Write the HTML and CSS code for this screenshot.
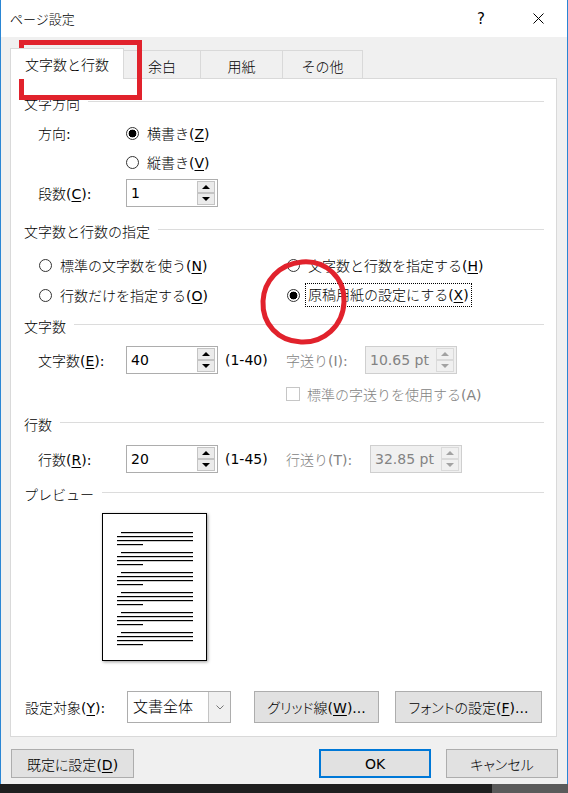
FILE: index.html
```html
<!DOCTYPE html>
<html lang="ja">
<head>
  <meta charset="UTF-8">
  <title>ページ設定</title>
  <link rel="stylesheet" href="styles.css">
</head>
<body>
  <div class="window">
    <div class="titlebar">
      <span class="title">ページ設定</span>
      <span class="help">?</span>
      <span class="close">
        <svg width="11" height="11" viewBox="0 0 11 11"><path d="M0.5 0.5 L10.5 10.5 M10.5 0.5 L0.5 10.5" stroke="#000" stroke-width="1" fill="none"/></svg>
      </span>
    </div>

    <div class="client">
      <div class="tabs">
        <div class="tab active">文字数と行数</div>
        <div class="tab tab-margin">余白</div>
        <div class="tab tab-paper">用紙</div>
        <div class="tab tab-other">その他</div>
      </div>

      <div class="panel">
        <div class="sec"><span>文字方向</span></div>

        <div class="row row-dir">
          <span class="label">方向<span class="key">:</span></span>
          <span class="radio"><span class="dot on"></span><span>横書き<span class="key">(<u>Z</u>)</span></span></span>
        </div>
        <div class="row row-vert">
          <span class="radio"><span class="dot"></span><span>縦書き<span class="key">(<u>V</u>)</span></span></span>
        </div>
        <div class="row row-cols">
          <span class="label">段数<span class="key">(<u>C</u>):</span></span>
          <div class="spin">
            <span class="spin-val">1</span>
            <span class="spin-btns"><span><i class="up"></i></span><span><i class="down"></i></span></span>
          </div>
        </div>

        <div class="sec sec-grid"><span>文字数と行数の指定</span></div>
        <div class="choices">
          <span class="radio"><span class="dot"></span><span>標準の文字数を使う<span class="key">(<u>N</u>)</span></span></span>
          <span class="radio"><span class="dot"></span><span>文字数と行数を指定する<span class="key">(<u>H</u>)</span></span></span>
          <span class="radio"><span class="dot"></span><span>行数だけを指定する<span class="key">(<u>O</u>)</span></span></span>
          <span class="radio radio-focus"><span class="dot on"></span><span class="focus">原稿用紙の設定にする<span class="key">(<u>X</u>)</span></span></span>
        </div>

        <div class="sec sec-chars"><span>文字数</span></div>
        <div class="row row-chars">
          <span class="label">文字数<span class="key">(<u>E</u>):</span></span>
          <div class="spin">
            <span class="spin-val">40</span>
            <span class="spin-btns"><span><i class="up"></i></span><span><i class="down"></i></span></span>
          </div>
          <span class="range">(1-40)</span>
          <span class="label2 pitch-chars">字送り<span class="key">(I):</span></span>
          <div class="spin spin-off">
            <span class="spin-val">10.65 pt</span>
            <span class="spin-btns"><span><i class="up"></i></span><span><i class="down"></i></span></span>
          </div>
        </div>
        <div class="row row-check">
          <span class="check"></span>
          <span class="muted">標準の字送りを使用する<span class="key">(A)</span></span>
        </div>

        <div class="sec sec-lines"><span>行数</span></div>
        <div class="row row-lines">
          <span class="label">行数<span class="key">(<u>R</u>):</span></span>
          <div class="spin">
            <span class="spin-val">20</span>
            <span class="spin-btns"><span><i class="up"></i></span><span><i class="down"></i></span></span>
          </div>
          <span class="range">(1-45)</span>
          <span class="label2 pitch-lines">行送り<span class="key">(T):</span></span>
          <div class="spin spin-off">
            <span class="spin-val">32.85 pt</span>
            <span class="spin-btns"><span><i class="up"></i></span><span><i class="down"></i></span></span>
          </div>
        </div>

        <div class="sec sec-preview"><span>プレビュー</span></div>
        <div class="preview">
          <svg width="103" height="146" viewBox="0 0 103 146">
            <g fill="#000">
              <rect x="18" y="18" width="72" height="1.2"/><rect x="14" y="22" width="76" height="1.2"/><rect x="14" y="26" width="76" height="1.2"/><rect x="14" y="30" width="26" height="1.2"/>
              <rect x="18" y="38" width="72" height="1.2"/><rect x="14" y="42" width="76" height="1.2"/><rect x="14" y="46" width="76" height="1.2"/><rect x="14" y="50" width="26" height="1.2"/>
              <rect x="18" y="58" width="72" height="1.2"/><rect x="14" y="62" width="76" height="1.2"/><rect x="14" y="66" width="76" height="1.2"/><rect x="14" y="70" width="26" height="1.2"/>
              <rect x="18" y="78" width="72" height="1.2"/><rect x="14" y="82" width="76" height="1.2"/><rect x="14" y="86" width="76" height="1.2"/><rect x="14" y="90" width="26" height="1.2"/>
              <rect x="18" y="98" width="72" height="1.2"/><rect x="14" y="102" width="76" height="1.2"/><rect x="14" y="106" width="76" height="1.2"/><rect x="14" y="110" width="26" height="1.2"/>
              <rect x="18" y="118" width="72" height="1.2"/><rect x="14" y="122" width="76" height="1.2"/><rect x="14" y="126" width="76" height="1.2"/><rect x="14" y="130" width="26" height="1.2"/>
            </g>
          </svg>
        </div>

        <div class="row row-target">
          <span class="label">設定対象<span class="key">(<u>Y</u>):</span></span>
          <div class="combo">
            <span class="combo-val">文書全体</span>
            <span class="combo-btn">
              <svg width="8" height="5" viewBox="0 0 8 5"><path d="M0.5 0.5 L4 4 L7.5 0.5" stroke="#777" fill="none"/></svg>
            </span>
          </div>
          <button class="btn btn-grid">グリッド線<span class="key">(<u>W</u>)...</span></button>
          <button class="btn btn-font">フォントの設定<span class="key">(<u>F</u>)...</span></button>
        </div>
      </div>

      <div class="footer">
        <button class="btn btn-default">既定に設定<span class="key">(<u>D</u>)</span></button>
        <button class="btn btn-ok key">OK</button>
        <button class="btn btn-cancel">キャンセル</button>
      </div>
    </div>
  </div>

  <div class="taskbar">
    <div class="taskbar-dark"></div>
    <div class="taskbar-gray"></div>
  </div>

  <!-- red annotations drawn over the dialog -->
  <div class="mark-rect"></div>
  <svg class="mark-circle" width="100" height="94" viewBox="0 0 100 94">
    <path d="M48 6 C72 4 91 22 90 46 C89 70 70 87 47 86 C24 85 8 68 9 45 C10 25 25 8 48 6" stroke="#e1222c" stroke-width="5" fill="none"/>
  </svg>
</body>
</html>
```

FILE: styles.css
```css
* {
  margin: 0;
  padding: 0;
  box-sizing: border-box;
}

body {
  position: relative;
  width: 568px;
  height: 793px;
  overflow: hidden;
  font-family: "DejaVu Sans", "Noto Sans CJK JP", sans-serif;
  font-size: 14px;
  font-weight: 300;
  color: #000;
  background: #f0f0f0;
}

/* latin runs keep the regular weight */
.key,
.spin-val,
.range,
.help {
  font-weight: 400;
}

u {
  text-decoration-thickness: 1px;
  text-underline-offset: 2px;
}

.window {
  height: 784px;
  display: flex;
  flex-direction: column;
  border-left: 1px solid #2a86d4;
  border-right: 1px solid #2a86d4;
}

/* title bar */
.titlebar {
  height: 37px;
  background: #fff;
  display: flex;
  align-items: center;
  padding-left: 9px;
  padding-right: 6px;
  font-size: 13px;
}

.title {
  flex: 1;
}

.help {
  width: 46px;
  text-align: center;
  font-size: 15px;
}

.close {
  width: 46px;
  margin-left: 11px;
  display: flex;
  justify-content: center;
}

/* dialog client area */
.client {
  flex: 1;
  padding: 11px 0 0 9px;
}

.tabs {
  display: flex;
  align-items: flex-end;
  height: 30px;
}

.tab {
  height: 28px;
  margin-left: -1px;
  border: 1px solid #d9d9d9;
  border-bottom: none;
  background: #f0f0f0;
  display: flex;
  align-items: center;
  justify-content: center;
  padding-top: 2px;
}

.tab.active {
  width: 114px;
  height: 31px;
  margin-left: 0;
  margin-bottom: -1px;
  background: #fff;
  position: relative;
  z-index: 1;
  padding-top: 0;
}

.tab-margin { width: 78px; }
.tab-paper { width: 83px; }
.tab-other { width: 81px; }

.panel {
  width: 547px;
  height: 659px;
  border: 1px solid #d9d9d9;
  background: #fff;
  padding: 14px 12px 0 13px;
  display: flex;
  flex-direction: column;
}

/* section headers with rule */
.sec {
  height: 20px;
  display: flex;
  align-items: center;
  gap: 8px;
}

.sec::after {
  content: "";
  flex: 1;
  height: 1px;
  background: #dcdcdc;
  margin-top: -3px;
}

.sec-grid { margin-top: 14px; }
.sec-chars { margin-top: 9px; }
.sec-lines { margin-top: 10px; }
.sec-preview { margin-top: 11px; }

.row {
  display: flex;
  align-items: center;
  height: 28px;
  padding-left: 14px;
}

.row-dir { margin-top: 6px; }
.row-vert { margin-top: 1px; padding-left: 102px; }
.row-cols { margin-top: 3px; }
.row-chars { margin-top: 10px; }
.row-check { margin-top: 10px; height: 20px; padding-left: 262px; }
.row-lines { margin-top: 11px; }
.row-target { margin-top: 30px; height: 32px; padding-left: 1px; }

.label {
  width: 88px;
}

.row-target .label {
  width: 102px;
}

/* radio buttons */
.radio {
  display: flex;
  align-items: center;
  gap: 8px;
  white-space: nowrap;
}

.dot {
  width: 13px;
  height: 13px;
  border: 1px solid #333;
  border-radius: 50%;
  background: #fff;
  flex-shrink: 0;
}

.dot.on {
  background: radial-gradient(circle, #000 0, #000 3.6px, #fff 4.2px);
}

.choices {
  margin-top: 12px;
  padding-left: 15px;
  display: grid;
  grid-template-columns: 248px 1fr;
  grid-auto-rows: 24px;
  row-gap: 6px;
  align-items: center;
}

.radio-focus {
  gap: 5px;
}

.focus {
  border: 1px dotted #000;
  padding: 0 2px;
  height: 24px;
  line-height: 22px;
}

/* spin boxes */
.spin {
  width: 92px;
  height: 28px;
  border: 1px solid #adadad;
  background: #fff;
  display: flex;
}

.spin-val {
  flex: 1;
  padding-left: 4px;
  line-height: 26px;
  white-space: nowrap;
}

.spin-btns {
  width: 21px;
  padding: 1px 2px 1px 1px;
  display: flex;
  flex-direction: column;
}

.spin-btns span {
  flex: 1;
  border: 1px solid #c4c4c4;
  background: #ebebeb;
  display: flex;
  align-items: center;
  justify-content: center;
}

.spin-btns i {
  width: 0;
  height: 0;
  border-left: 4px solid transparent;
  border-right: 4px solid transparent;
}

.spin-btns i.up { border-bottom: 4px solid #000; }
.spin-btns i.down { border-top: 4px solid #000; }

.spin-off {
  background: #f0f0f0;
  border-color: #cfcfcf;
  color: #838383;
}

.spin-off .spin-btns span {
  background: #f0f0f0;
  border-color: #dadada;
}

.spin-off .spin-btns i.up { border-bottom-color: #a2a2a2; }
.spin-off .spin-btns i.down { border-top-color: #a2a2a2; }

.range {
  width: 68px;
  padding-left: 7px;
}

.label2 {
  color: #838383;
  white-space: nowrap;
}

.pitch-chars { width: 79px; }
.pitch-lines { width: 84px; }

.check {
  width: 14px;
  height: 14px;
  border: 1px solid #c6c6c6;
  background: #fff;
  margin-right: 7px;
}

.muted {
  color: #838383;
}

/* preview page */
.preview {
  margin-top: 9px;
  margin-left: 78px;
  width: 105px;
  height: 148px;
  border: 1px solid #000;
  background: #fff;
  box-shadow: 1px 1px 3px rgba(0, 0, 0, 0.4);
}

.preview svg {
  display: block;
}

/* combo + buttons */
.combo {
  width: 104px;
  height: 32px;
  border: 1px solid #adadad;
  display: flex;
  background: #fff;
}

.combo-val {
  flex: 1;
  padding-left: 5px;
  line-height: 30px;
  font-size: 15px;
}

.combo-btn {
  width: 22px;
  background: #f0f0f0;
  border-left: 1px solid #c4c4c4;
  display: flex;
  align-items: center;
  justify-content: center;
}

.btn {
  font-family: inherit;
  font-size: 14px;
  font-weight: 300;
  font-feature-settings: "palt";
  color: #000;
  background: #e1e1e1;
  border: 1px solid #adadad;
  height: 32px;
  white-space: nowrap;
}

.btn-grid {
  width: 125px;
  margin-left: 23px;
}

.btn-font {
  width: 147px;
  margin-left: 16px;
}

.footer {
  margin-top: 12px;
  display: flex;
}

.footer .btn {
  height: 29px;
}

.btn-default {
  width: 123px;
  margin-left: 1px;
}

.btn-ok {
  width: 112px;
  margin-left: 185px;
  border: 2px solid #0078d7;
  font-weight: 400;
}

.btn-cancel {
  width: 112px;
  margin-left: 15px;
}

/* taskbar strip behind the dialog */
.taskbar {
  height: 9px;
  display: flex;
}

.taskbar-dark {
  width: 492px;
  background: #1f1f1f;
}

.taskbar-gray {
  flex: 1;
  background: #5a5a5a;
}

/* red annotations */
.mark-rect {
  position: absolute;
  left: 19px;
  top: 40px;
  width: 123px;
  height: 60px;
  border: 5px solid #e1222c;
}

.mark-circle {
  position: absolute;
  left: 254px;
  top: 256px;
}
```
